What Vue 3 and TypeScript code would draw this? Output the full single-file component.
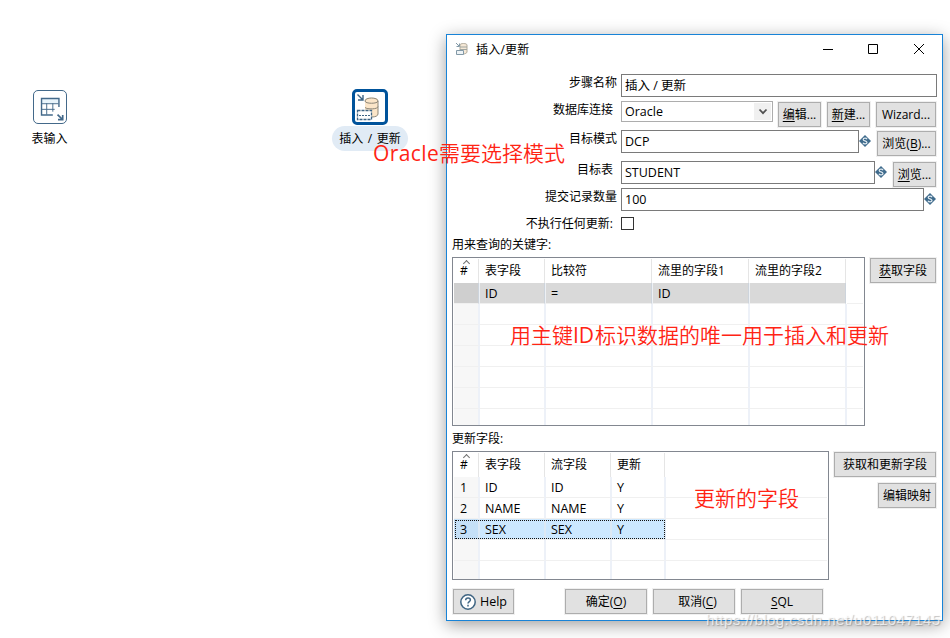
<script setup lang="ts">
interface Btn { key?: string; text: string; after?: string; width: number }
interface Field { label: string; value: string; width: number; kind: 'text' | 'select'; height: number; inset?: boolean; variable?: boolean; buttons: Btn[] }
interface Row { cells: string[]; state?: string }

const fields: Field[] = [
  { label: '步骤名称', value: '插入 / 更新', width: 316, kind: 'text', height: 27, buttons: [] },
  { label: '数据库连接', value: 'Oracle', width: 152, kind: 'select', height: 29, inset: true, buttons: [
    { key: '编', text: '辑...', width: 43 }, { key: '新', text: '建...', width: 43 }, { text: 'Wizard...', width: 60 },
  ] },
  { label: '目标模式', value: 'DCP', width: 238, kind: 'text', height: 31, variable: true, buttons: [{ text: '浏览(', key: 'B', after: ')...', width: 59 }] },
  { label: '目标表', value: 'STUDENT', width: 254, kind: 'text', height: 27, inset: true, variable: true, buttons: [{ key: '浏', text: '览...', width: 43 }] },
  { label: '提交记录数量', value: '100', width: 303, kind: 'text', height: 29, variable: true, buttons: [] },
]

const keyHeads = ['#', '表字段', '比较符', '流里的字段1', '流里的字段2', '']
const keyRows: Row[] = [
  { cells: ['', 'ID', '=', 'ID', '', ''], state: 'muted' },
  ...Array.from({ length: 6 }, () => ({ cells: ['', '', '', '', '', ''] })),
]
const updHeads = ['#', '表字段', '流字段', '更新', '']
const updRows: Row[] = [
  { cells: ['1', 'ID', 'ID', 'Y', ''] },
  { cells: ['2', 'NAME', 'NAME', 'Y', ''] },
  { cells: ['3', 'SEX', 'SEX', 'Y', ''], state: 'chosen' },
  { cells: ['', '', '', '', ''] },
  { cells: ['', '', '', '', ''] },
]
</script>

<template>
  <div class="desk">
    <div class="step step-input">
      <div class="tile">
        <svg width="34" height="34" viewBox="0 0 34 34" fill="none" stroke="#43698a">
          <path d="M8 8h18v5H8z" fill="#e8f4fb" stroke="none" />
          <path d="M20 25.500H8V8h18.500v9" stroke-width="1.500" />
          <path d="M8 13.500h18M8 19.500h14M13.500 13v12M20 13v9" stroke-width="1" />
          <path d="M25 25l5 5M30.500 25.500v5h-5" stroke-width="1.800" />
        </svg>
      </div>
      <span class="caption">表输入</span>
    </div>
    <div class="step step-upsert">
      <div class="tile chosen-tile">
        <svg width="30" height="30" viewBox="0 0 30 30" fill="none" stroke="#3d6484">
          <path d="M10 8c0-3 13-3 13 0v14c0 2-4 3-7 3H10z" fill="#fbe5c8" stroke="none" />
          <path d="M10 9c0-4 13-4 13 0v13c0 2-3 3-6 3M10 9c0 3 13 3 13 0M10 15.500c2 2 13 2 13-1" stroke="#8c8577" />
          <path d="M2.500 18.500h14v9h-14z" fill="#fff" stroke-width="1.300" stroke-dasharray="3 1" />
          <path d="M4 23.500h11" stroke-dasharray="2 1" />
          <path d="M2.500 2.500l5 5M8 3v5H3" stroke-width="1.400" />
        </svg>
      </div>
      <span class="caption pill">插入 / 更新</span>
    </div>

    <section class="dialog">
      <header class="titlebar">
        <svg class="app-icon" width="14" height="14" viewBox="0 0 14 14" fill="none" stroke="#8299a7">
          <path d="M5 3c0-2 7-2 7 0v7c0 1-2 2-4 2H5z" fill="#f5e8d6" stroke="#b0a99a" />
          <path d="M5 5h7M5 7.500h7" stroke="#a0a5a0" />
          <path d="M1.500 8.500h7v4h-7zM1 1l3 3M4.500 1.500v3h-3" fill="#eef3f6" />
        </svg>
        <span class="title">插入/更新</span>
        <svg class="winctl" width="102" height="12" viewBox="0 0 102 12" fill="none" stroke="#000">
          <path d="M0 6.500h10M45.500 1.500h9v9h-9zM91 1l10 10M101 1L91 11" />
        </svg>
      </header>

      <div v-for="f in fields" :key="f.label" class="row" :style="{ height: f.height + 'px' }">
        <label class="label" :class="{ inset: f.inset }">{{ f.label }}</label>
        <div class="box" :class="f.kind" :style="{ width: f.width + 'px' }">
          <span>{{ f.value }}</span>
          <i v-if="f.kind === 'select'" class="drop">
            <svg width="10" height="8" viewBox="0 0 10 8" fill="none" stroke="#505050" stroke-width="1.800"><path d="M1.500 1.500L5 5.200l3.500-3.700" /></svg>
          </i>
        </div>
        <svg v-if="f.variable" class="var" width="12" height="12" viewBox="0 0 12 12">
          <path d="M6 0l6 6-6 6-6-6z" fill="#3f6b8c" />
          <path d="M8 4.200C7.500 2.800 4.200 2.800 4.200 4.500 4.200 6.200 8 5.600 8 7.500 8 9.200 4.500 9.200 4 7.700" fill="none" stroke="#dfe9f0" stroke-width="1.200" />
        </svg>
        <div class="actions">
          <button v-for="b in f.buttons" :key="b.text" class="btn" :style="{ width: b.width + 'px' }"><template v-if="b.after">{{ b.text }}<u>{{ b.key }}</u>{{ b.after }}</template><template v-else><u v-if="b.key">{{ b.key }}</u>{{ b.text }}</template></button>
        </div>
      </div>
      <div class="row check-row">
        <label class="label inset">不执行任何更新:</label>
        <span class="check"></span>
      </div>

      <div class="heading">用来查询的关键字:</div>
      <div class="block key-block">
        <div class="grid keys">
          <div class="line head"><span v-for="(h, i) in keyHeads" :key="i" class="cell">{{ h }}</span><i class="caret"></i></div>
          <div v-for="(r, i) in keyRows" :key="i" class="line" :class="r.state"><span v-for="(c, j) in r.cells" :key="j" class="cell">{{ c }}</span></div>
        </div>
        <div class="side"><button class="btn get"><u>获</u>取字段</button></div>
      </div>

      <div class="heading second">更新字段:</div>
      <div class="block upd-block">
        <div class="grid updates">
          <div class="line head"><span v-for="(h, i) in updHeads" :key="i" class="cell">{{ h }}</span><i class="caret"></i></div>
          <div v-for="(r, i) in updRows" :key="i" class="line" :class="r.state"><span v-for="(c, j) in r.cells" :key="j" class="cell">{{ c }}</span></div>
        </div>
        <div class="side">
          <button class="btn get-update">获取和更新字段</button>
          <button class="btn mapping">编辑映射</button>
        </div>
      </div>

      <footer class="footer">
        <button class="btn help">
          <svg width="16" height="16" viewBox="0 0 16 16" fill="none" stroke="#3f6583"><circle cx="8" cy="8" r="7.200" fill="#fff" stroke-width="1.500" /><path d="M5.700 6.300c0-3 4.700-2.800 4.700-.2C10.400 7.600 8 7.700 8 9.600M8 10.800v1.600" stroke-width="1.500" /></svg>
          Help
        </button>
        <button class="btn wide">确定(<u>O</u>)</button>
        <button class="btn wide cancel">取消(<u>C</u>)</button>
        <button class="btn wide"><u>S</u>QL</button>
      </footer>
    </section>

    <span class="note note-mode"><span class="latin">Oracle</span>需要选择模式</span>
    <span class="note note-key">用主键<span class="latin id">ID</span>标识数据的唯一用于插入和更新</span>
    <span class="note note-fields">更新的字段</span>
    <span class="watermark">https://blog.csdn.net/u011047145</span>
  </div>
</template>

<style>
body { margin: 0; background: #fff; overflow: hidden; }
</style>

<style scoped>
* { box-sizing: border-box; }
.desk { position: relative; width: 950px; height: 638px; overflow: hidden; background: #fff; color: #000; font: 12px/18px "Open Sans", "Noto Sans CJK SC", sans-serif; }
.step { position: absolute; top: 89px; display: flex; flex-direction: column; align-items: center; }
.step-input { left: 20px; width: 60px; }
.step-upsert { left: 332px; width: 76px; }
.tile { width: 34px; height: 34px; margin: 1px 0 6px; border: 1.500px solid #43698a; border-radius: 5px; display: flex; align-items: center; justify-content: center; flex: none; }
.chosen-tile { width: 36px; height: 36px; margin: 0 0 1px; border: 3px solid #00539b; }
.caption { height: 18px; line-height: 18px; white-space: nowrap; }
.step-input .caption { margin-right: 1px; }
.pill { width: 76px; height: 25px; line-height: 25px; border-radius: 13px; background: #e1ebf5; text-align: center; word-spacing: 1.500px; }
.dialog { position: absolute; left: 446px; top: 34px; width: 497px; height: 587px; border: 1px solid #1883d7; background: #fff; box-shadow: 0 4px 16px rgba(0, 0, 0, .38); display: flex; flex-direction: column; }
.titlebar { display: flex; height: 39px; flex: none; padding-left: 8px; }
.app-icon { margin-top: 7px; }
.title { margin: 6px 0 0 7px; letter-spacing: .2px; }
.winctl { margin: 8px 17px 0 auto; }
.row { display: flex; align-items: flex-start; flex: none; }
.label { width: 170px; margin-right: 4px; text-align: right; flex: none; }
.inset { padding-right: 4px; }
.box { height: 23px; border: 1px solid #7a7a7a; padding-left: 3px; line-height: 22px; flex: none; display: flex; justify-content: space-between; font-size: 12.500px; }
.select { height: 21px; border-color: #adadad; line-height: 19px; }
.drop { width: 17px; height: 17px; margin: 1px; background: #f0f0f0; display: flex; align-items: center; justify-content: center; }
.var { margin-top: 5px; flex: none; }
.actions { display: flex; gap: 6px; margin: 1px 6px 0 auto; }
.btn { height: 25px; padding: 0; border: 1px solid #adadad; box-shadow: 0 0 0 1px #f0f0f0; background: #e1e1e1; color: #000; font: inherit; line-height: 23px; white-space: nowrap; flex: none; display: block; text-align: center; }
u { text-decoration: underline; text-underline-offset: 2px; }
.check-row { height: 19px; align-items: flex-start; }
.check-row .label { margin-top: -2px; }
.check { width: 13px; height: 13px; border: 1px solid #333; }
.heading { height: 21px; padding-left: 5px; line-height: 18px; flex: none; }
.second { height: 25px; padding-top: 4px; }
.block { display: flex; padding: 0 6px 0 5px; justify-content: space-between; flex: none; }
.key-block { height: 169px; }
.upd-block { height: 129px; }
.side { display: flex; flex-direction: column; align-items: flex-end; gap: 6px; padding-top: 1px; }
.get { width: 66px; }
.get-update { width: 102px; }
.mapping { width: 58px; }
.grid { position: relative; border: 1px solid #828790; padding: 1px; overflow: hidden; }
.keys { width: 413px; --cols: 26px 66px 107px 97px 97px 16px; }
.updates { width: 377px; --cols: 26px 66px 66px 54px 161px; }
.line { display: grid; grid-template-columns: var(--cols); height: 21px; line-height: 22px; font-size: 12.500px; }
.cell { border-right: 2px solid #edf1f8; border-bottom: 1px solid #f0f0f0; padding-left: 5px; white-space: nowrap; overflow: hidden; }
.cell:first-child { background: #f7f7f7; padding-left: 6px; }
.cell:last-child { border-right: 0; }
.head { height: 24px; line-height: 23px; font-size: 12px; }
.head .cell, .head .cell:first-child { background: #fff; border-bottom: 0; border-right: 1px solid #e5e5e5; margin-right: 1px; }
.head .cell:nth-last-child(2) { border-right: 0; }
.muted .cell:not(:last-child) { background: #d9d9d9; border-right-color: #cdd4dc; border-right-width: 1px; box-shadow: 1px 0 0 #edf0f4; margin-right: 1px; }
.muted .cell:nth-child(5) { box-shadow: none; }
.muted .cell:first-child { background: #cfcfcf; }
.chosen { position: relative; }
.chosen .cell:not(:last-child) { background: #cce8ff; border-right-color: #dce9f5; }
.chosen .cell:first-child { background: #c5e0f7; }
.chosen::after { content: ""; box-sizing: border-box; position: absolute; left: 1px; top: 1px; width: 210px; height: 19px; border: 1px dotted #111; }
.caret { position: absolute; left: 11px; top: 3px; width: 5px; height: 5px; border: solid #707070; border-width: 1px 0 0 1px; transform: rotate(45deg); }
.footer { display: flex; gap: 6px; margin-top: 9px; padding-left: 6px; }
.help { width: 61px; margin-right: 45px; display: flex; align-items: center; justify-content: center; gap: 4px; font-size: 12.500px; }
.wide { width: 82px; }
.cancel { padding-left: 7px; }
.note { position: absolute; color: #ff2414; font-size: 21px; line-height: 30px; font-weight: 350; white-space: nowrap; }
.latin { display: inline-block; width: 66px; font-weight: 400; letter-spacing: .4px; }
.id { width: 22px; letter-spacing: 0; }
.note-mode { left: 373px; top: 138px; }
.note-key { left: 510px; top: 320px; }
.note-fields { left: 694px; top: 483px; }
.watermark { position: absolute; left: 706px; top: 609px; font: 15px/22px "Liberation Sans", sans-serif; color: rgba(255, 255, 255, .7); text-shadow: 1px 1px 1px rgba(110, 110, 110, .45); white-space: nowrap; letter-spacing: .43px; }
</style>
